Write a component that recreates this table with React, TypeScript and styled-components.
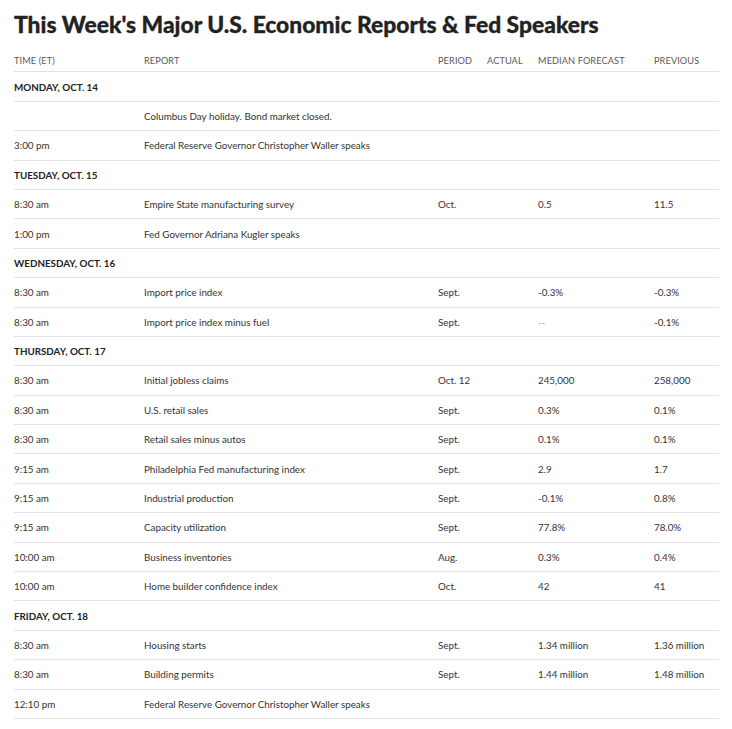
import React from "react";
import styled, { createGlobalStyle } from "styled-components";

const Global = createGlobalStyle`
  html, body { margin: 0; padding: 0; background: #fff; }
  body { font-family: Lato, "Liberation Sans", sans-serif; color: #2b2b2b; }
`;

const Page = styled.div`
  padding: 9px 13px 0 14px;
  width: 705px;
`;

const Title = styled.h1`
  margin: 0;
  font-family: Lato, "Open Sans", sans-serif;
  font-weight: 900;
  font-size: 22.8px;
  line-height: 30px;
  color: #222;
  letter-spacing: 0px;
  -webkit-text-stroke: 0.3px #222;
`;

const cols = "130px 294px 49px 51px 116px 65px";

const Row = styled.div<{ $head?: boolean }>`
  display: grid;
  grid-template-columns: ${cols};
  border-bottom: 1px solid #e2e2e2;
  align-items: center;
  height: ${(p) => (p.$head ? "24.4px" : "28.4px")};
  box-sizing: content-box;
`;

const HeadCell = styled.div`
  font-size: 9.2px;
  color: #5a5a5a;
  text-transform: uppercase;
  letter-spacing: 0.1px;
  padding-top: 2px;
`;

const Cell = styled.div<{ $muted?: boolean }>`
  font-size: 9.8px;
  color: ${(p) => (p.$muted ? "#aaa" : "#333")};
  white-space: nowrap;
`;

const DayCell = styled.div`
  grid-column: 1 / -1;
  font-size: 9.8px;
  font-weight: 700;
  color: #222;
`;

const HeadRow = styled(Row)`
  margin-top: 8px;
`;

type Item = [string, string, string?, string?, string?];
type Day = { day: string; items: Item[] };

const data: Day[] = [
  {
    day: "MONDAY, OCT. 14",
    items: [
      ["", "Columbus Day holiday. Bond market closed."],
      ["3:00 pm", "Federal Reserve Governor Christopher Waller speaks"],
    ],
  },
  {
    day: "TUESDAY, OCT. 15",
    items: [
      ["8:30 am", "Empire State manufacturing survey", "Oct.", "0.5", "11.5"],
      ["1:00 pm", "Fed Governor Adriana Kugler speaks"],
    ],
  },
  {
    day: "WEDNESDAY, OCT. 16",
    items: [
      ["8:30 am", "Import price index", "Sept.", "-0.3%", "-0.3%"],
      ["8:30 am", "Import price index minus fuel", "Sept.", "--", "-0.1%"],
    ],
  },
  {
    day: "THURSDAY, OCT. 17",
    items: [
      ["8:30 am", "Initial jobless claims", "Oct. 12", "245,000", "258,000"],
      ["8:30 am", "U.S. retail sales", "Sept.", "0.3%", "0.1%"],
      ["8:30 am", "Retail sales minus autos", "Sept.", "0.1%", "0.1%"],
      ["9:15 am", "Philadelphia Fed manufacturing index", "Sept.", "2.9", "1.7"],
      ["9:15 am", "Industrial production", "Sept.", "-0.1%", "0.8%"],
      ["9:15 am", "Capacity utilization", "Sept.", "77.8%", "78.0%"],
      ["10:00 am", "Business inventories", "Aug.", "0.3%", "0.4%"],
      ["10:00 am", "Home builder confidence index", "Oct.", "42", "41"],
    ],
  },
  {
    day: "FRIDAY, OCT. 18",
    items: [
      ["8:30 am", "Housing starts", "Sept.", "1.34 million", "1.36 million"],
      ["8:30 am", "Building permits", "Sept.", "1.44 million", "1.48 million"],
      ["12:10 pm", "Federal Reserve Governor Christopher Waller speaks"],
    ],
  },
];

export default function App() {
  return (
    <Page>
      <Global />
      <Title>This Week's Major U.S. Economic Reports &amp; Fed Speakers</Title>
      <HeadRow $head>
        <HeadCell>Time (ET)</HeadCell>
        <HeadCell>Report</HeadCell>
        <HeadCell>Period</HeadCell>
        <HeadCell>Actual</HeadCell>
        <HeadCell>Median Forecast</HeadCell>
        <HeadCell>Previous</HeadCell>
      </HeadRow>
      {data.map((d) => (
        <React.Fragment key={d.day}>
          <Row>
            <DayCell>{d.day}</DayCell>
          </Row>
          {d.items.map((it, i) => (
            <Row key={i}>
              <Cell>{it[0]}</Cell>
              <Cell>{it[1]}</Cell>
              <Cell>{it[2] ?? ""}</Cell>
              <Cell></Cell>
              <Cell $muted={it[3] === "--"}>{it[3] ?? ""}</Cell>
              <Cell>{it[4] ?? ""}</Cell>
            </Row>
          ))}
        </React.Fragment>
      ))}
    </Page>
  );
}
